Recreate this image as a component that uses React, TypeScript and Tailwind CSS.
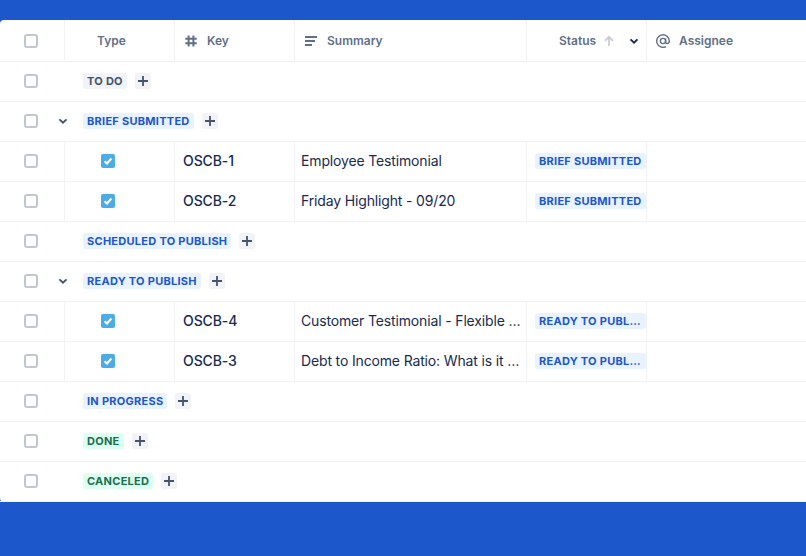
import React from 'react';

type Tone = 'gray' | 'blue' | 'green';

const toneClass: Record<Tone, string> = {
  gray: 'bg-[#f1f3f6] text-[#44546f]',
  blue: 'bg-[#e9f2ff] text-[#1c57cc]',
  green: 'bg-[#dcfff1] text-[#216e4e]',
};

const Checkbox = () => (
  <div className="h-[14px] w-[14px] rounded-[3px] border-2 border-[#c1c7d2] bg-white" />
);

const Chevron = ({ className }: { className: string }) => (
  <svg width="10" height="10" viewBox="0 0 10 10" className={className}>
    <path d="M1.5 3.4 5 6.8l3.5-3.4" fill="none" stroke="currentColor" strokeWidth="1.9" />
  </svg>
);

const Lozenge = ({ label, tone }: { label: string; tone: Tone }) => (
  <span className={`flex h-4 items-center rounded-[3px] px-1 text-[11px] leading-4 font-bold tracking-[0.27px] whitespace-nowrap ${toneClass[tone]}`}>
    {label}
  </span>
);

const TaskIcon = () => (
  <svg width="14" height="14" viewBox="0 0 14 14">
    <rect width="14" height="14" rx="2" fill="#4bade8" />
    <path d="M3.6 7.2 6 9.5l4.4-5" fill="none" stroke="#fff" strokeWidth="2" />
  </svg>
);

const HeaderCell = ({ children, className = '' }: { children?: React.ReactNode; className?: string }) => (
  <div className={`flex h-10 items-center border-r border-[#f1f2f4] pt-0.5 text-xs font-semibold text-[#626f86] ${className}`}>
    {children}
  </div>
);

const GroupRow = ({ label, tone, open }: { label: string; tone: Tone; open?: boolean }) => (
  <div className="flex h-10 items-center border-b border-[#f1f2f4] pb-px">
    <div className="flex w-[58px] justify-center pl-[3px]">
      <Checkbox />
    </div>
    <div className="flex w-[25px] items-center">
      {open && <Chevron className="text-[#44546f]" />}
    </div>
    <Lozenge label={label} tone={tone} />
    <div className="ml-2 flex h-4 w-4 items-center justify-center rounded-[3px] bg-[#f1f3f6]">
      <svg width="12" height="12" viewBox="0 0 12 12">
        <path d="M6 1v10M1 6h10" stroke="#44546f" strokeWidth="1.8" />
      </svg>
    </div>
  </div>
);

const IssueRow = ({ issueKey, summary, status }: { issueKey: string; summary: string; status: string }) => (
  <div className="grid h-10 grid-cols-[65px_110px_120px_232px_120px_1fr] border-b border-[#f1f2f4] text-sm text-[#172b4d]">
    <div className="flex items-center justify-center border-r border-[#f1f2f4] pr-[3px] pb-px">
      <Checkbox />
    </div>
    <div className="flex items-center border-r border-[#f1f2f4] pb-px pl-9">
      <TaskIcon />
    </div>
    <div className="flex items-center border-r border-[#f1f2f4] pb-px pl-2 font-medium tracking-[-0.1px]">{issueKey}</div>
    <div className="flex items-center border-r border-[#f1f2f4] pr-1 pb-px pl-1.5 tracking-[-0.15px]">
      <span className="truncate">{summary}</span>
    </div>
    <div className="flex items-center border-r border-[#f1f2f4] pb-px pl-2">
      <span className="flex h-4 w-[111px] items-center rounded-[3px] bg-[#e9f2ff] px-1 text-[11px] leading-4 font-bold tracking-[0.27px] text-[#1c57cc]">
        <span className="truncate">{status}</span>
      </span>
    </div>
    <div />
  </div>
);

export default function App() {
  return (
    <div className="flex h-[556px] w-[806px] flex-col overflow-hidden bg-[#1c57cc] pt-5 font-['Inter',sans-serif]">
      <div className="h-[482px] rounded-l-[4px] bg-white">
        {/* Cabecera */}
        <div className="grid h-[42px] grid-cols-[65px_110px_120px_232px_120px_1fr] border-b border-[#f1f2f4]">
          <HeaderCell className="justify-center pr-[3px]">
            <Checkbox />
          </HeaderCell>
          <HeaderCell className="pl-8">Type</HeaderCell>
          <HeaderCell className="pl-[10px]">
            <svg width="12" height="12" viewBox="0 0 12 12" className="mr-2.5">
              <path d="M3.6 .5v11M8.4 .5v11M.3 3.8h11.4M.3 8.2h11.4" stroke="#626f86" strokeWidth="2" />
            </svg>
            Key
          </HeaderCell>
          <HeaderCell className="pl-[10px]">
            <svg width="12" height="12" viewBox="0 0 12 12" className="mr-2.5">
              <path d="M0 2h12M0 6h10M0 10h7" stroke="#626f86" strokeWidth="2" />
            </svg>
            Summary
          </HeaderCell>
          <HeaderCell className="pl-8">
            Status
            <svg width="12" height="12" viewBox="0 0 12 12" className="ml-[7px]">
              <path d="M6 11V2M2 5.8 6 1.8l4 4" fill="none" stroke="#c9ccd3" strokeWidth="1.7" />
            </svg>
            <Chevron className="ml-[14px] text-[#172b4d]" />
          </HeaderCell>
          <div className="flex h-10 items-center pt-0.5 pl-[9px] text-xs font-semibold text-[#626f86]">
            <svg width="14" height="14" viewBox="0 0 14 14" className="mr-[9px]">
              <circle cx="7" cy="7" r="2.6" fill="none" stroke="#626f86" strokeWidth="1.4" />
              <path d="M9.6 4.4v3.5c0 2.2 3.7 2.2 3.7-.9A6.3 6.3 0 1 0 10 12.6" fill="none" stroke="#626f86" strokeWidth="1.4" />
            </svg>
            Assignee
          </div>
        </div>

        <GroupRow label="TO DO" tone="gray" />
        <GroupRow label="BRIEF SUBMITTED" tone="blue" open />
        <IssueRow issueKey="OSCB-1" summary="Employee Testimonial" status="BRIEF SUBMITTED" />
        <IssueRow issueKey="OSCB-2" summary="Friday Highlight - 09/20" status="BRIEF SUBMITTED" />
        <GroupRow label="SCHEDULED TO PUBLISH" tone="blue" />
        <GroupRow label="READY TO PUBLISH" tone="blue" open />
        <IssueRow issueKey="OSCB-4" summary="Customer Testimonial - Flexible Payment Options" status="READY TO PUBLISH" />
        <IssueRow issueKey="OSCB-3" summary="Debt to Income Ratio: What is it and Why it Matters" status="READY TO PUBLISH" />
        <GroupRow label="IN PROGRESS" tone="blue" />
        <GroupRow label="DONE" tone="green" />
        <GroupRow label="CANCELED" tone="green" />
      </div>
    </div>
  );
}
